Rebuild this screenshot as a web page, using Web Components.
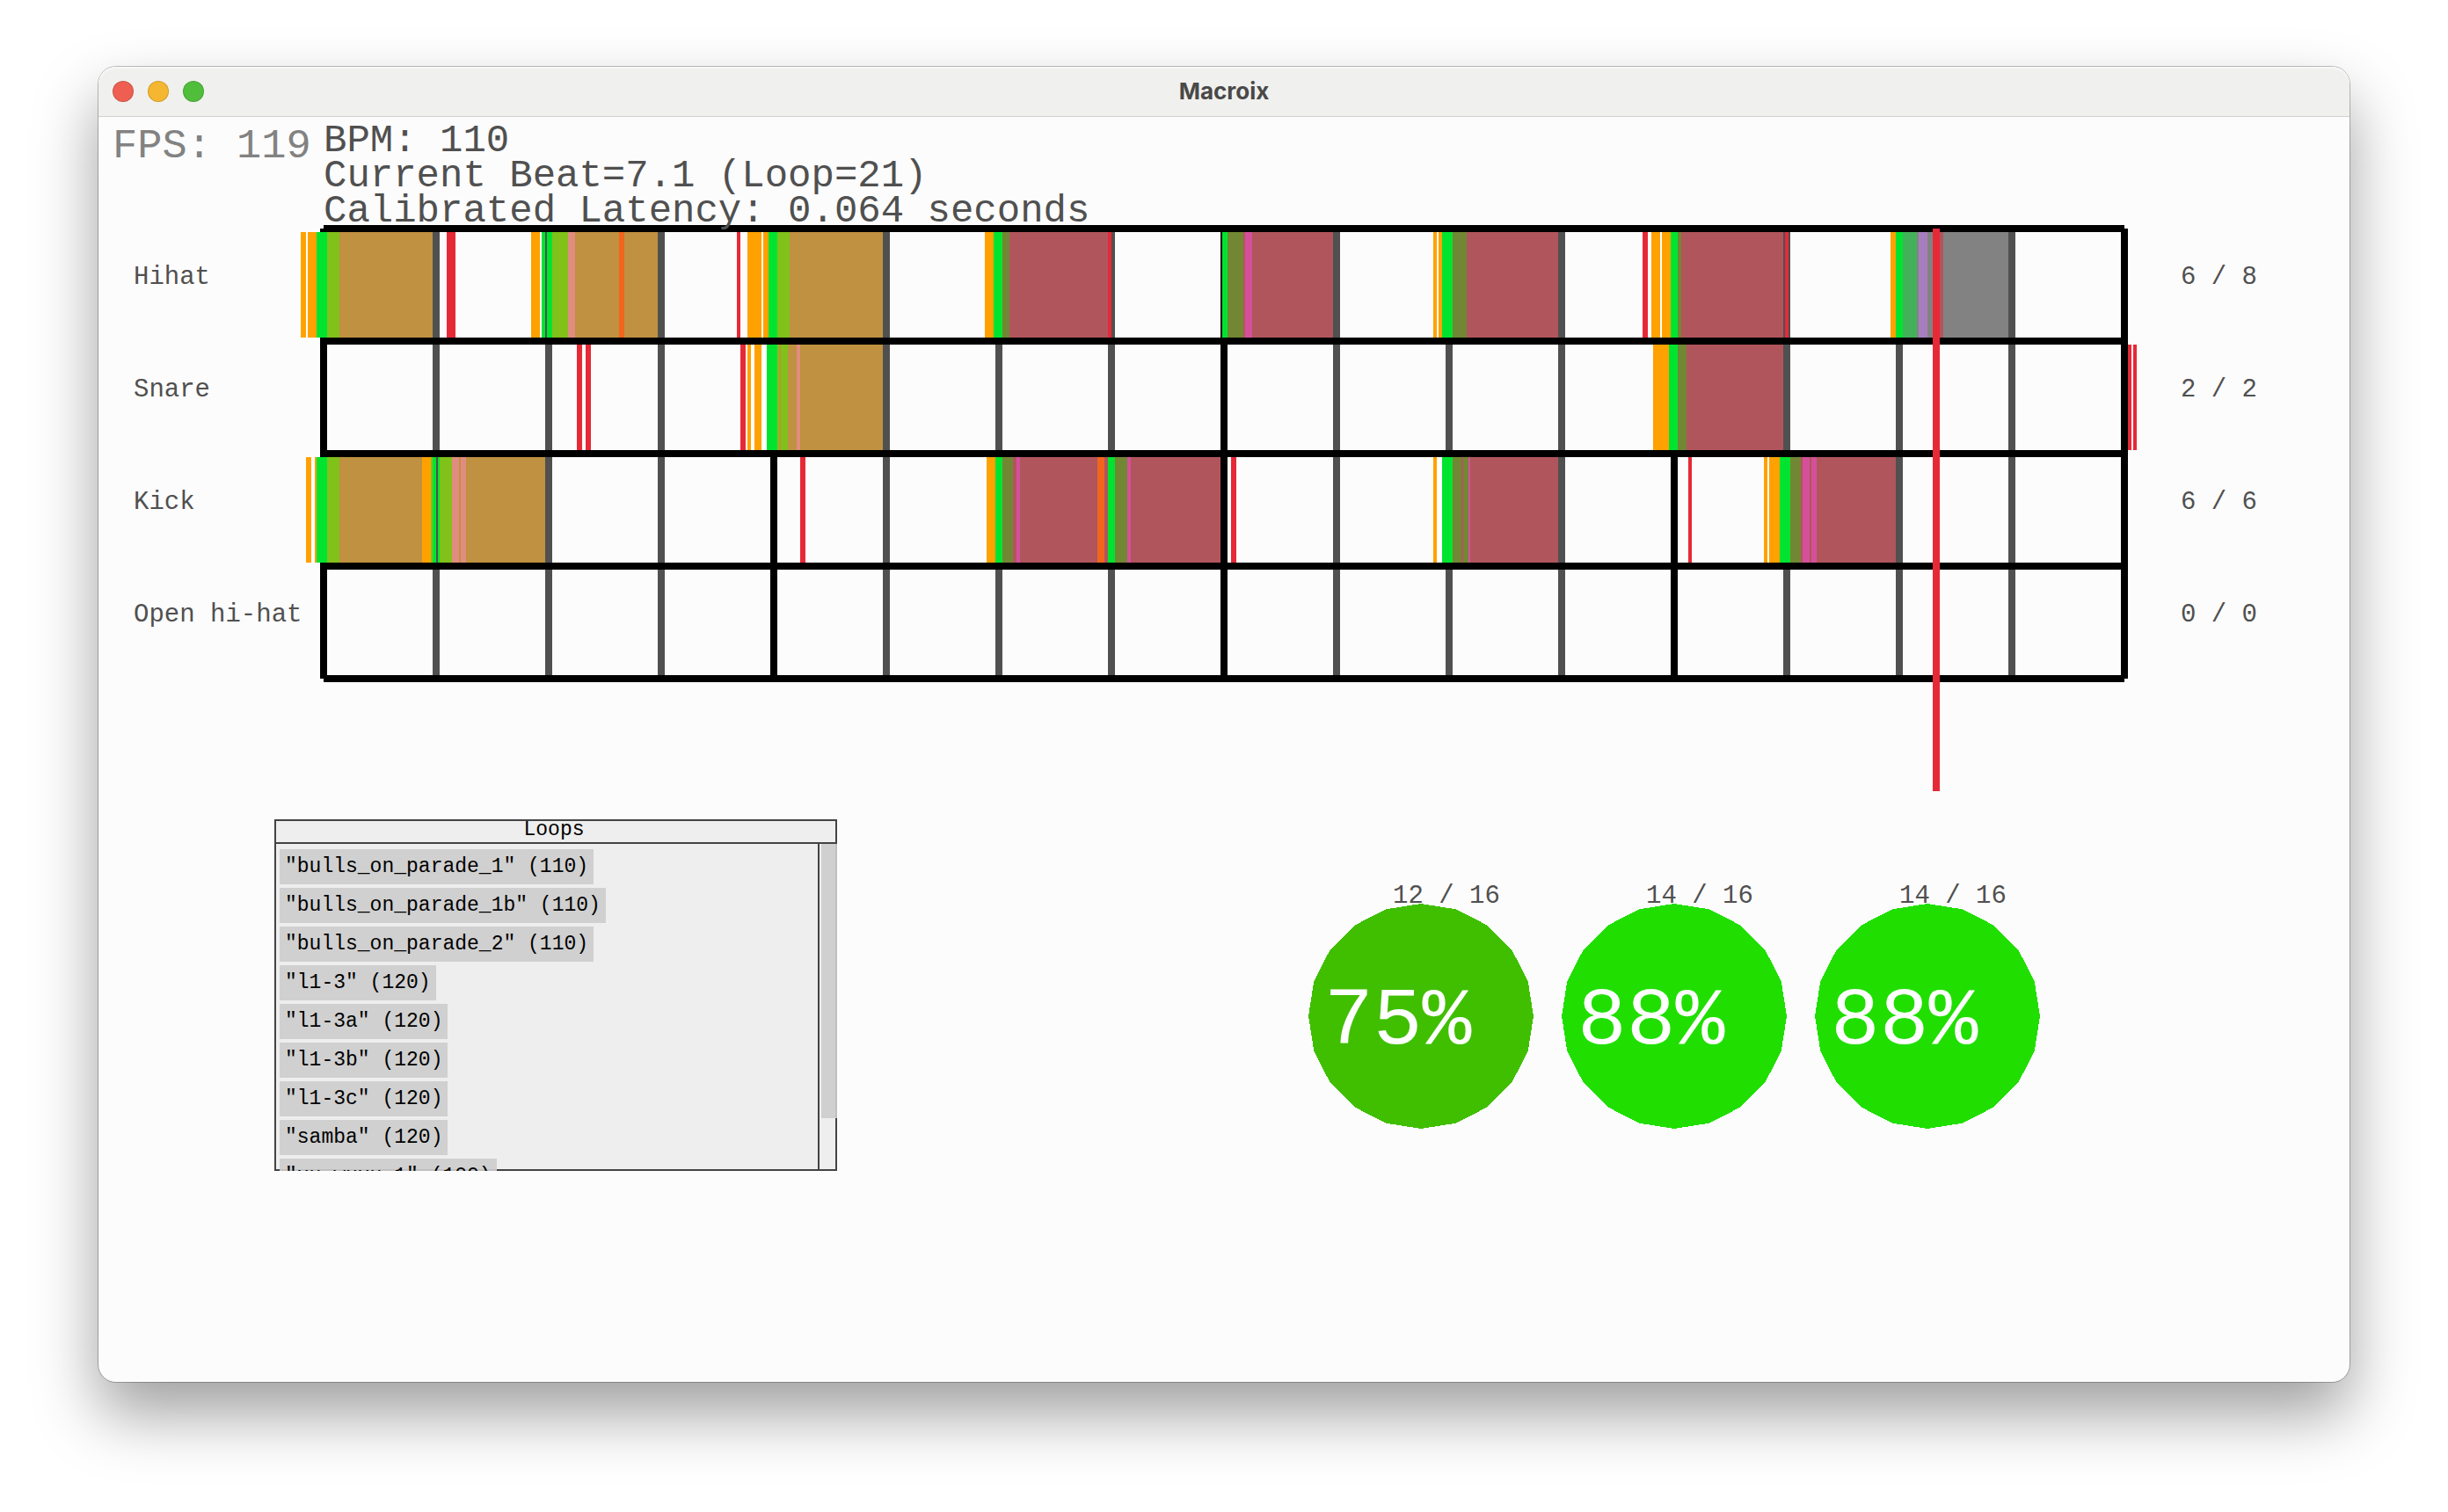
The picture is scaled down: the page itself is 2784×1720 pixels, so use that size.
<!DOCTYPE html>
<html lang="en">
<head>
<meta charset="utf-8">
<title>Macroix</title>
<style>
  body { margin: 0; background: #fff; }
</style>
</head>
<body>
<macroix-app></macroix-app>

<template id="t-app">
  <style>
    :host { display: flex; flex-direction: column; box-sizing: border-box; min-height: 100vh; padding: 76px 112px 148px; font-family: "Liberation Mono", monospace; }
    app-window { flex: 1; }
    header { display: flex; height: 120px; padding-top: 8px; position: relative; z-index: 1; }
    .fps { box-sizing: border-box; width: 256px; padding-left: 16px; font-size: 47px; line-height: 54px; color: #828282; white-space: pre; }
    .info { font-size: 44px; line-height: 40px; color: #505050; white-space: pre; }
    .info p { margin: 0; }
    .lower { display: flex; justify-content: space-between; align-items: flex-start; padding: 160px 352px 0 200px; }
    .scores { display: flex; gap: 32px; padding-top: 72px; }
  </style>
  <app-window>
    <span slot="title">Macroix</span>
    <header>
      <div class="fps">FPS: 119</div>
      <div class="info"><p>BPM: 110</p><p>Current Beat=7.1 (Loop=21)</p><p>Calibrated Latency: 0.064 seconds</p></div>
    </header>
    <beat-grid></beat-grid>
    <section class="lower">
      <loop-list></loop-list>
      <div class="scores">
        <score-dial fill="#40bf00"><span slot="ratio">12 / 16</span>75%</score-dial>
        <score-dial fill="#20df00"><span slot="ratio">14 / 16</span>88%</score-dial>
        <score-dial fill="#20df00"><span slot="ratio">14 / 16</span>88%</score-dial>
      </div>
    </section>
  </app-window>
</template>

<template id="t-window">
  <style>
    :host { display: flex; flex-direction: column; background: #fcfcfc; border-radius: 20px; box-shadow: 0 0 0 1px rgba(0,0,0,.24), 0 36px 72px rgba(0,0,0,.38); }
    .bar { display: grid; grid-template-columns: 1fr auto 1fr; align-items: center; box-sizing: border-box; height: 57px; padding: 0 16px; background: #f0f0ee; border-bottom: 1px solid #d0d0ce; border-radius: 20px 20px 0 0; box-shadow: inset 0 2px 1px #f8f8f7; }
    .lights { display: flex; gap: 16px; }
    .lights button { width: 24px; height: 24px; padding: 0; border: 1px solid rgba(0,0,0,.14); border-radius: 50%; }
    .close { background: #ee5f52; }
    .min { background: #f5b631; }
    .max { background: #50be3a; }
    .title { font: 700 26px/32px Inter, sans-serif; color: #494947; }
    .body { margin-top: -1px; }
  </style>
  <div class="bar">
    <div class="lights">
      <button class="close" aria-label="Close"></button>
      <button class="min" aria-label="Minimise"></button>
      <button class="max" aria-label="Zoom"></button>
    </div>
    <div class="title"><slot name="title"></slot></div>
  </div>
  <div class="body"><slot></slot></div>
</template>

<template id="t-grid">
  <style>
    :host { display: grid; grid-template-columns: 256px 1fr 256px; font-size: 29px; color: #505050; white-space: pre; }
    .col { display: flex; flex-direction: column; }
    .col div { flex: 1; display: flex; align-items: center; padding-bottom: 16px; line-height: 32px; }
    .names { padding-left: 40px; }
    .counts { padding-left: 64px; }
    svg { display: block; width: 100%; overflow: visible; shape-rendering: crispEdges; position: relative; }
  </style>
  <div class="col names"><div>Hihat</div><div>Snare</div><div>Kick</div><div>Open hi-hat</div></div>
  <svg viewBox="0 0 2048 512" aria-hidden="true"></svg>
  <div class="col counts"><div>6 / 8</div><div>2 / 2</div><div>6 / 6</div><div>0 / 0</div></div>
</template>

<template id="t-loops">
  <style>
    :host { display: flex; flex-direction: column; box-sizing: border-box; width: 640px; height: 400px; border: 2px solid #434343; background: #eee; font-size: 23px; color: #000; }
    h2 { margin: 0; height: 24px; padding-right: 4px; border-bottom: 2px solid #434343; font: inherit; line-height: 20px; text-align: center; }
    .body { flex: 1; min-height: 0; display: flex; margin: 0 -2px -2px 0; }
    .list { flex: 1; display: flex; flex-direction: column; align-items: flex-start; gap: 4px; padding: 6px 4px 0; overflow: hidden; }
    button { flex: none; height: 40px; border: 0; padding: 0 6px; background: rgba(204,204,204,.91); font: inherit; line-height: 40px; color: inherit; white-space: pre; }
    .track { width: 18px; padding-left: 2px; margin-bottom: 2px; border-left: 2px solid #434343; }
    .thumb { height: 312px; background: rgba(204,204,204,.91); }
  </style>
  <h2>Loops</h2>
  <div class="body">
    <div class="list"></div>
    <div class="track"><div class="thumb"></div></div>
  </div>
</template>

<template id="t-dial">
  <style>
    :host { display: flex; flex-direction: column; width: 256px; color: #505050; white-space: pre; }
    .ratio { height: 24px; padding-left: 96px; font-size: 29px; line-height: 32px; }
    .dial { display: grid; align-items: center; position: relative; }
    .dial > * { grid-area: 1 / 1; }
    svg { display: block; width: 100%; shape-rendering: crispEdges; }
    .value { position: relative; padding: 14px 0 0 18px; font-size: 93px; line-height: 96px; color: #fff; }
  </style>
  <div class="ratio"><slot name="ratio"></slot></div>
  <div class="dial">
    <svg viewBox="-128 -128 256 256" aria-hidden="true"><polygon/></svg>
    <div class="value"><slot></slot></div>
  </div>
</template>

<script>
  class Base extends HTMLElement {
    constructor() {
      super();
      this.attachShadow({ mode: "open" })
        .append(document.getElementById(this.constructor.tpl).content.cloneNode(true));
    }
  }
  class AppWindow extends Base { static tpl = "t-window"; }
  class MacroixApp extends Base { static tpl = "t-app"; }

  const C = {
    o: "#ffa100", w: "#ffffff", g: "#00e430", l: "#80c11a", t: "#bf9140", r: "#e62937",
    p: "#e28c80", x: "#f2651c", k: "#505050", v: "#728733", s: "#b1555c", m: "#d4509a",
    c: "#43b15a", y: "#828282", u: "#a67dbe", b: "#000000"
  };
  // Each lane: runs of "start code end code end ...", measured from the window's canvas origin.
  const LANES = [
    ["342 o 348 w 350 o 360 g 372 l 386 t 492 k 500", "508 r 518",
     "604 o 614 w 616 g 620 k 622 g 628 l 646 p 654 t 704 x 710 t 748",
     "838 r 842", "850 o 866 w 868 o 874 g 884 l 898 t 1004",
     "1120 o 1130 g 1140 v 1148 s 1260 r 1264 k 1268",
     "1388 b 1390 g 1396 v 1414 s 1416 m 1424 s 1516",
     "1630 o 1634 w 1636 o 1640 g 1652 v 1668 s 1772",
     "1868 r 1874 w 1878 o 1888 w 1890 o 1900 g 1908 v 1912 s 2028 k 2030 r 2034 k 2036",
     "2150 o 2156 g 2164 c 2180 y 2182 u 2192 y 2206 s 2210 y 2284"],
    ["656 r 662", "666 r 672",
     "842 r 848 w 850 o 854 w 858 o 866 w 872 g 884 l 886 t 888 l 896 t 906 p 910 t 1004",
     "1880 o 1898 g 1908 v 1918 s 2028", "2420 r 2424 w 2426 r 2430"],
    ["348 o 354 w 358 o 360 g 372 l 386 t 480 o 490 l 492 g 496 k 498 g 500 l 514 p 522 t 524 p 530 t 620",
     "910 r 916", "1122 o 1132 g 1140 v 1152 s 1156 m 1160 s 1248 x 1256 s 1260 g 1268 v 1282 m 1286 s 1388",
     "1400 r 1406", "1630 o 1634 w 1640 g 1652 v 1662 s 1664 v 1670 m 1672 s 1772",
     "1920 r 1924", "2006 o 2010 w 2012 o 2024 g 2036 v 2048 s 2050 m 2058 s 2060 m 2066 s 2156"],
    []
  ];
  const ORIGIN = 368;

  class BeatGrid extends Base {
    static tpl = "t-grid";
    connectedCallback() {
      const out = [];
      const rect = (x, y, w, h, f) => out.push(`<rect x="${x}" y="${y}" width="${w}" height="${h}" fill="${f}"/>`);
      for (let i = 0; i <= 16; i++) rect(i * 128 - 4, 0, 8, 512, i % 4 ? C.k : C.b);
      LANES.forEach((runs, row) => runs.forEach(run => {
        const a = run.split(" ");
        for (let i = 0; i + 2 < a.length; i += 2)
          rect(a[i] - ORIGIN, row * 128 + 4, a[i + 2] - a[i], 120, C[a[i + 1]]);
      }));
      for (let j = 0; j <= 4; j++) rect(j % 4 ? -4 : 0, j * 128 - 4, j % 4 ? 2052 : 2048, 8, C.b);
      rect(1830, 0, 8, 640, C.r);
      this.shadowRoot.querySelector("svg").innerHTML = out.join("");
    }
  }

  const LOOPS = ['"bulls_on_parade_1" (110)', '"bulls_on_parade_1b" (110)', '"bulls_on_parade_2" (110)',
    '"l1-3" (120)', '"l1-3a" (120)', '"l1-3b" (120)', '"l1-3c" (120)', '"samba" (120)', '"xu_wuxu_1" (100)'];
  class LoopList extends Base {
    static tpl = "t-loops";
    connectedCallback() {
      this.shadowRoot.querySelector(".list").replaceChildren(...LOOPS.map(name => {
        const b = document.createElement("button");
        b.textContent = name;
        return b;
      }));
    }
  }

  class ScoreDial extends Base {
    static tpl = "t-dial";
    connectedCallback() {
      const poly = this.shadowRoot.querySelector("polygon");
      const pts = Array.from({ length: 20 }, (_, k) => {
        const a = k * Math.PI / 10;
        return `${(128 * Math.cos(a)).toFixed(2)},${(128 * Math.sin(a)).toFixed(2)}`;
      });
      poly.setAttribute("points", pts.join(" "));
      poly.setAttribute("fill", this.getAttribute("fill"));
    }
  }

  customElements.define("app-window", AppWindow);
  customElements.define("beat-grid", BeatGrid);
  customElements.define("loop-list", LoopList);
  customElements.define("score-dial", ScoreDial);
  customElements.define("macroix-app", MacroixApp);
</script>
</body>
</html>
